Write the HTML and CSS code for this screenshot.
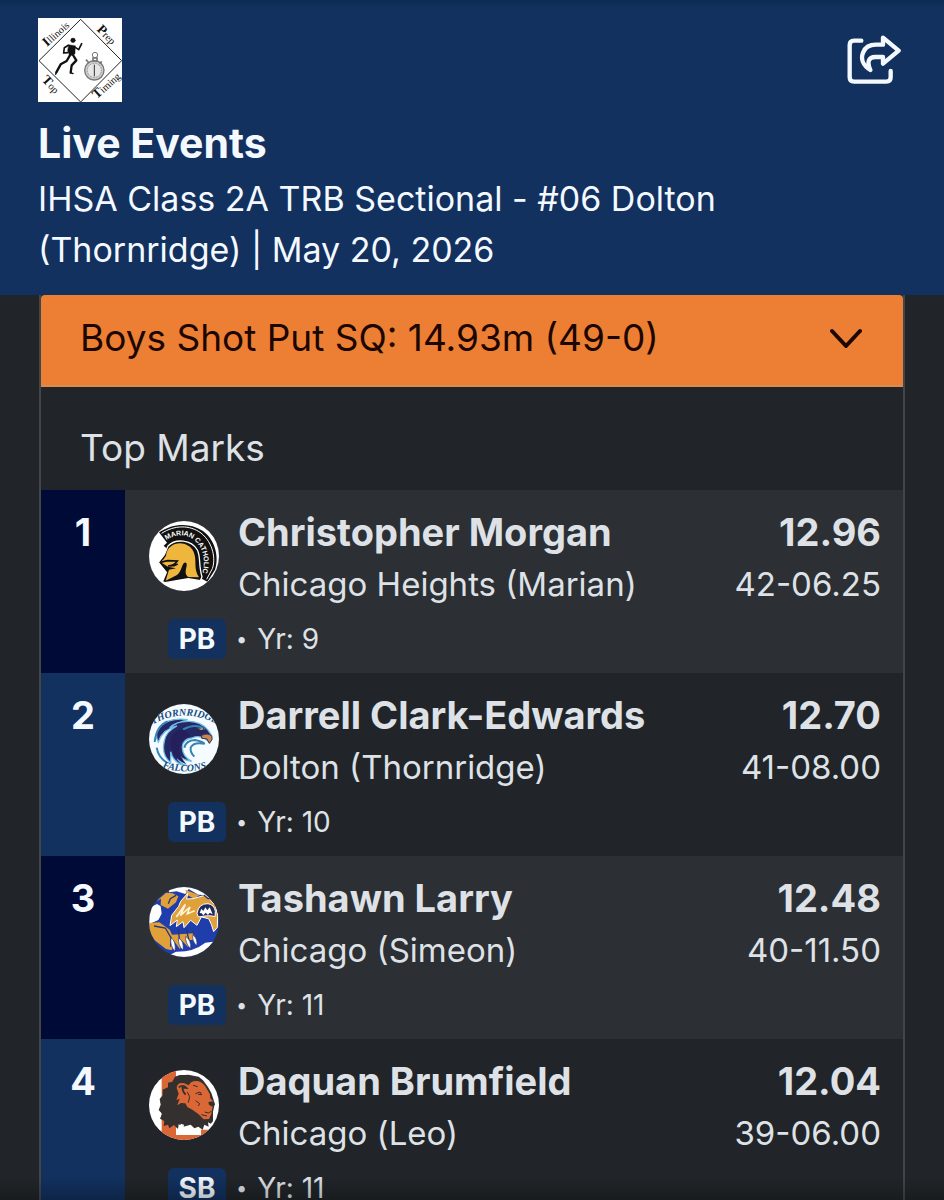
FILE: index.html
```html
<!DOCTYPE html>
<html lang="en">
<head>
<meta charset="utf-8">
<meta name="viewport" content="width=device-width, initial-scale=1">
<title>Live Events</title>
<link rel="stylesheet" href="styles.css">
</head>
<body>
<div class="app">
  <header class="header">
    <div class="header-bar">
      <svg class="logo" viewBox="24 24 252 252" role="img" aria-label="Illinois Prep Top Timing">
        <rect x="24" y="24" width="252" height="252" fill="#fff"/>
        <path d="M152 28 275 152 152 276 27 152Z" fill="none" stroke="#222" stroke-width="3"/>
        <g class="logo-text">
          <text transform="translate(51 111) rotate(-42)"><tspan class="logo-cap">I</tspan>llinois</text>
          <text transform="translate(199 60) rotate(45)"><tspan class="logo-cap">P</tspan>rep</text>
          <text transform="translate(34 211) rotate(47)"><tspan class="logo-cap">T</tspan>op</text>
          <text transform="translate(200 268) rotate(-42)"><tspan class="logo-cap">T</tspan>iming</text>
        </g>
        <g fill="#111" stroke="#111" stroke-linejoin="round" stroke-linecap="round">
          <circle cx="129" cy="91" r="7"/>
          <path d="M116 104 136 107 135 132 119 138 113 122Z"/>
          <path d="M115 106 103 113 101 129 113 128M136 112 146 119 155 101" fill="none" stroke-width="5"/>
          <path d="M121 134 110 153 92 163 79 187M129 135 139 151 125 166 122 188" fill="none" stroke-width="7"/>
          <path d="M79 187 77 193M122 188 129 191" fill="none" stroke-width="4"/>
        </g>
        <g fill="none" stroke="#777">
          <circle cx="193" cy="181" r="29" fill="#ccc" stroke-width="4"/>
          <circle cx="193" cy="181" r="21" fill="#e6e6e6" stroke-width="3" stroke-dasharray="2 3"/>
          <circle cx="195" cy="135" r="8" stroke-width="3"/>
          <path d="M189 144h12v9h-12ZM168 149l9 10M215 154l-6 7" stroke-width="5"/>
          <path d="M193 164v35" stroke="#333" stroke-width="3"/>
        </g>
      </svg>
      <button class="share" type="button" aria-label="Share">
        <svg viewBox="23 28 162 150" fill="none" stroke="#f4f9ff" stroke-width="13" stroke-linecap="round" stroke-linejoin="round">
          <path d="M66 45H44Q31 45 31 58V155Q31 168 44 168H141Q154 168 154 155V136"/>
          <path d="M131 36 178 75 131 114V94H108C88 94 82 108 93 133C70 119 64 99 71 81C78 62 92 57 110 57H131Z"/>
        </svg>
      </button>
    </div>
    <h1 class="title">Live Events</h1>
    <p class="subtitle">IHSA Class 2A TRB Sectional - #06 Dolton (Thornridge) | May 20, 2026</p>
  </header>

  <main class="content">
    <section class="card">
      <button class="event" type="button" aria-expanded="true">
        <span>Boys Shot Put SQ: 14.93m (49-0)</span>
        <svg class="chevron" viewBox="0 0 32 20" fill="none" stroke="#1c0700" stroke-width="4" stroke-linecap="round" stroke-linejoin="round" aria-hidden="true"><path d="M2 3 16 18 30 3"/></svg>
      </button>
      <h2 class="section-title">Top Marks</h2>
      <ol class="marks">
        <li class="row">
          <span class="rank">1</span>
          <div class="entry">
            <div class="main">
              <svg class="avatar" viewBox="26 26 210 210" role="img" aria-label="Marian Catholic">
                <rect x="26" y="26" width="210" height="210" fill="#fff"/>
                <path d="M56 60C98 32 150 30 188 56C228 86 236 140 224 172L201 208 173 193 70 100 80 91Z" fill="#111"/>
                <path d="M64 63C102 38 148 37 182 62C220 93 226 142 216 169L199 201" fill="none" stroke="#fff" stroke-width="3"/>
                <path d="M83 101C105 78 153 81 171 113C182 134 174 160 185 193L180 205 144 199 122 203 75 211 66 209 78 180 54 150 72 127Z" fill="#111" stroke="#fff" stroke-width="4"/>
                <path d="M77 130C81 86 142 80 160 119C171 145 158 168 176 195L145 194C126 184 145 158 137 151C123 147 126 185 104 191L76 205 86 172 107 168 83 163 60 149Q69 144 77 130Z" fill="#efb63d"/>
                <path d="M60 150 82 145 111 146Q100 161 83 161L101 160 112 155" fill="none" stroke="#111" stroke-width="5"/>
                <path id="arc-marian" d="M78 83C117 58 157 67 179 104C195 133 194 162 180 196" fill="none"/>
                <text class="marian-text"><textPath href="#arc-marian">MARIAN CATHOLIC</textPath></text>
              </svg>
              <div class="who"><h3 class="name">Christopher Morgan</h3><p class="team">Chicago Heights (Marian)</p></div>
              <div class="result"><strong class="name">12.96</strong><span class="team">42-06.25</span></div>
            </div>
            <div class="meta"><span class="badge">PB</span><span class="dot">•</span><span>Yr: 9</span></div>
          </div>
        </li>
        <li class="row">
          <span class="rank">2</span>
          <div class="entry">
            <div class="main">
              <svg class="avatar" viewBox="26 26 210 210" role="img" aria-label="Thornridge Falcons">
                <rect x="26" y="26" width="210" height="210" fill="#f4fcff"/>
                <path d="M49 112C64 76 103 67 142 73Q103 84 88 98Q105 77 147 78Q181 79 202 103L214 120 208 142 195 130Q174 119 155 128Q125 132 126 157Q127 184 154 198Q119 195 109 168L113 193Q125 208 139 211Q100 207 91 169L91 202Q62 179 72 137Q76 109 110 92Q67 101 54 140Q47 130 49 112Z" fill="#242865" stroke="#71bce4" stroke-width="4"/>
                <path d="M43 140Q48 91 82 78M49 157Q54 187 81 203M128 103Q166 82 193 102M132 157Q137 135 164 134Q183 137 193 145Q158 139 151 157Q149 171 162 184" fill="none" stroke="#3783b5" stroke-width="6"/>
                <path d="M108 106Q79 128 97 169Q110 197 139 207Q116 184 116 159Q116 132 148 121Q137 97 108 106Z" fill="#25205c"/>
                <path d="M167 101 186 106 190 99" fill="#d7b59b" stroke="#222" stroke-width="3"/>
                <path d="M184 120Q203 111 215 123L215 133 207 144 200 131 184 129Z" fill="#c38758" stroke="#443140" stroke-width="3"/>
                <path id="arc-thornridge" d="M38 88Q128 34 230 86" fill="none"/>
                <text class="falcon-text"><textPath href="#arc-thornridge">THORNRIDGE</textPath></text>
                <path id="arc-falcons" d="M66 216Q132 241 212 214" fill="none"/>
                <text class="falcon-text"><textPath href="#arc-falcons">FALCONS</textPath></text>
              </svg>
              <div class="who"><h3 class="name">Darrell Clark-Edwards</h3><p class="team">Dolton (Thornridge)</p></div>
              <div class="result"><strong class="name">12.70</strong><span class="team">41-08.00</span></div>
            </div>
            <div class="meta"><span class="badge">PB</span><span class="dot">•</span><span>Yr: 10</span></div>
          </div>
        </li>
        <li class="row">
          <span class="rank">3</span>
          <div class="entry">
            <div class="main">
              <svg class="avatar" viewBox="26 26 210 210" role="img" aria-label="Simeon Wolverines">
                <rect x="26" y="26" width="210" height="210" fill="#1f3eab"/>
                <path d="M80 26H190L204 51 174 49 145 32 135 47 109 39 87 42ZM26 89 50 77 61 84 64 106 54 125 27 137ZM87 58 106 57 98 73 78 82 65 78Z" fill="#fff"/>
                <path d="M49 68 77 43 97 45 114 54 107 72 83 91 61 80 62 61ZM135 34 158 43 177 51 161 61 139 49ZM26 134 57 132 88 154 95 169 161 165 167 184 149 185 144 207 125 187 119 213 101 188 94 216 77 212 43 186 26 158Z" fill="#e0a13a"/>
                <path d="M139 62 158 61 197 50 225 82 232 111 231 147 220 160 213 138 205 121 183 116 170 141 151 126 131 148 128 130 108 145 111 125 89 142 94 111 115 84 121 69 142 45Z" fill="#e0a13a" stroke="#fff" stroke-width="3"/>
                <path d="M108 116 135 78 120 112 149 86 141 106 163 97" fill="none" stroke="#fff3d7" stroke-width="5"/>
                <path d="M170 105Q175 75 203 76Q222 79 225 99L224 115Q209 109 174 116Z" fill="#202b61" stroke="#fff" stroke-width="3"/>
                <path d="M178 104 183 91 189 98 195 87 201 96 208 87 217 108 208 103 203 110 196 103 189 111 184 105Z" fill="#fff"/>
                <path d="M190 50 203 61 216 61M107 51 90 61 84 76M41 143 75 149 92 178 91 205M114 153 118 191M137 151 147 189M158 158 164 184" fill="none" stroke="#253775" stroke-width="4"/>
                <path d="M77 236 107 220Q160 221 195 193L220 190V236Z" fill="#fff"/>
                <g fill="#fff" stroke="#253775" stroke-width="2"><path d="M92 178Q108 189 104 219Q88 203 92 178Z"/><path d="M115 179Q132 189 128 216Q112 201 115 179Z"/><path d="M136 174Q153 185 151 211Q134 195 136 174Z"/><path d="M158 169Q173 182 169 202Q154 187 158 169Z"/></g>
              </svg>
              <div class="who"><h3 class="name">Tashawn Larry</h3><p class="team">Chicago (Simeon)</p></div>
              <div class="result"><strong class="name">12.48</strong><span class="team">40-11.50</span></div>
            </div>
            <div class="meta"><span class="badge">PB</span><span class="dot">•</span><span>Yr: 11</span></div>
          </div>
        </li>
        <li class="row">
          <span class="rank">4</span>
          <div class="entry">
            <div class="main">
              <svg class="avatar" viewBox="26 26 210 210" role="img" aria-label="Leo Lions">
                <rect x="26" y="26" width="210" height="210" fill="#fff"/>
                <path d="M64 26H107V202H107V221H182V205H220V236H64Z" fill="#dc6736"/>
                <path d="M104 46 118 41 132 41 145 40 159 43 175 46 188 57 203 77 213 95 220 116 222 133 218 151 218 180 211 187 203 183 205 196 192 190 187 205 174 196 162 201 151 190 129 196 115 189 113 204 101 191 87 201 83 190 70 194 72 179 59 172 65 157 55 146 61 130 58 113 67 102 67 85 83 78 83 64 96 61Z" fill="#34302f"/>
                <path d="M109 80Q111 61 132 66L145 72Q153 56 175 60 192 67 199 82L208 97 210 111 223 125 218 134 215 145 213 158 206 173 190 174 174 158 156 145 141 137 135 126 122 125 111 132 118 112 108 116 115 97Z" fill="#dc6736"/>
                <path d="M115 78Q128 68 139 80L126 79Q127 92 136 100" fill="none" stroke="#34302f" stroke-width="5"/>
                <path d="M141 92 148 106 144 124M165 97 179 92 184 100 173 99M166 118 178 127 174 134M193 152 204 155 213 150M183 160 200 164M158 72 172 76" fill="none" stroke="#34302f" stroke-width="3"/>
                <path d="M204 122 221 120 224 130 216 136 206 130Z" fill="#34302f"/>
                <path d="M107 203 119 201 121 187 131 190 129 203H181V220H107Z" fill="#fff"/>
              </svg>
              <div class="who"><h3 class="name">Daquan Brumfield</h3><p class="team">Chicago (Leo)</p></div>
              <div class="result"><strong class="name">12.04</strong><span class="team">39-06.00</span></div>
            </div>
            <div class="meta"><span class="badge">SB</span><span class="dot">•</span><span>Yr: 11</span></div>
          </div>
        </li>
      </ol>
    </section>
  </main>
</div>
</body>
</html>
```
FILE: styles.css
```css
* { box-sizing: border-box; }
body {
  margin: 0;
  background: #212529;
  color: #dee2e6;
  font-family: Inter, "Liberation Sans", sans-serif;
  font-size: 34px;
  line-height: 52px;
}
h1, h2, h3, p, ol { margin: 0; padding: 0; font-weight: 400; }
button { font: inherit; border: 0; cursor: pointer; }
svg { display: block; }

.app {
  position: relative;
  display: flex;
  flex-direction: column;
  height: 100vh;
  overflow: hidden;
}
.app::after {
  content: "";
  position: absolute;
  inset: auto 0 0;
  height: 24px;
  background: linear-gradient(transparent, rgba(0, 0, 0, .25));
  pointer-events: none;
}

.header {
  flex: none;
  padding: 18px 38px 20px;
  background: linear-gradient(#0d2a52, #12315f 8px);
  color: #f4f9ff;
}
.header-bar { display: flex; justify-content: space-between; align-items: center; }
.logo { width: 84px; height: 84px; }
.logo-text { font: 31px "Liberation Serif", serif; fill: #111; }
.logo-cap { font-size: 40px; font-weight: 700; }
.share { padding: 5px; background: none; }
.share svg { width: 54px; height: 50px; }
.title { margin-top: 16px; font-size: 41px; font-weight: 700; line-height: 50px; }
.subtitle { margin-top: 5px; line-height: 51px; }

.content { flex: 1; min-height: 0; padding: 0 39px; overflow: hidden; }
.card { border: solid #42464b; border-width: 0 2px; }
.event {
  display: flex;
  justify-content: space-between;
  align-items: center;
  width: 100%;
  padding: 17px 41px 21px 39px;
  border-bottom: 2px solid #d98c50;
  border-radius: 4px 4px 0 0;
  background: #ec7f33;
  color: #1c0700;
  font-size: 37px;
  text-align: left;
}
.chevron { width: 32px; height: 20px; }
.section-title { padding: 35px 39px 16px; font-size: 37px; }

.marks { list-style: none; }
.row { display: flex; }
.row:nth-child(odd) { background: #2c2f34; }
.rank {
  flex: none;
  width: 84px;
  padding-top: 16px;
  background: #12315f;
  color: #f4f9ff;
  font-size: 38px;
  font-weight: 700;
  text-align: center;
}
.row:nth-child(odd) .rank { background: #000a37; }
.entry { flex: 1; min-width: 0; padding: 16px 22px 14px 24px; }
.main { display: flex; gap: 19px; }
.avatar { flex: none; width: 70px; height: 70px; margin-top: 15px; border-radius: 50%; }
.who { flex: 1; min-width: 0; }
.result { display: flex; flex-direction: column; text-align: right; }
.name { font-size: 38px; font-weight: 700; }
.team { font-size: 33px; }
.meta {
  display: flex;
  align-items: center;
  gap: 10px;
  margin-top: 9px;
  padding-left: 19px;
  font-size: 28px;
  line-height: 40px;
}
.badge {
  width: 58px;
  border-radius: 6px;
  background: #12315f;
  color: #f4f9ff;
  font-weight: 700;
  text-align: center;
}
.dot { font-size: 20px; }

.marian-text { font: 700 21px "Liberation Sans", sans-serif; fill: #fff; }
.falcon-text { font: italic 700 30px "Liberation Serif", serif; fill: #174a7d; }
```
